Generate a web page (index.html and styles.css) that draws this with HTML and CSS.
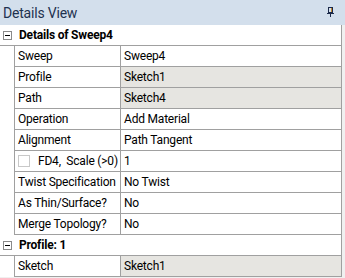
FILE: index.html
```html
<!DOCTYPE html>
<html lang="en">
<head>
  <meta charset="UTF-8" />
  <title>Details View</title>
  <link rel="stylesheet" href="styles.css">
</head>
<body>
  <div class="panel">
    <div class="title-bar">
      <span class="title">Details View</span>
      <svg class="pin" width="8" height="10" viewBox="0 0 8 10">
        <rect x="1.5" y="0.5" width="4" height="5" fill="none" stroke="#1c2a4a" stroke-width="1"/>
        <line x1="4.5" y1="1" x2="4.5" y2="5" stroke="#c98a2a" stroke-width="1"/>
        <line x1="0" y1="6.5" x2="7" y2="6.5" stroke="#1c2a4a" stroke-width="1"/>
        <line x1="3.5" y1="7" x2="3.5" y2="10" stroke="#1c2a4a" stroke-width="1"/>
      </svg>
    </div>

    <div class="grid">
      <div class="group">
        <span class="toggle"></span>
        <span class="group-name">Details of Sweep4</span>
      </div>
      <div class="row">
        <div class="name">Sweep</div>
        <div class="value">Sweep4</div>
      </div>
      <div class="row">
        <div class="name">Profile</div>
        <div class="value locked">Sketch1</div>
      </div>
      <div class="row">
        <div class="name">Path</div>
        <div class="value locked">Sketch4</div>
      </div>
      <div class="row">
        <div class="name">Operation</div>
        <div class="value">Add Material</div>
      </div>
      <div class="row">
        <div class="name">Alignment</div>
        <div class="value">Path Tangent</div>
      </div>
      <div class="row">
        <div class="name"><span class="check"></span>FD4,&nbsp; Scale (&gt;0)</div>
        <div class="value">1</div>
      </div>
      <div class="row">
        <div class="name">Twist Specification</div>
        <div class="value">No Twist</div>
      </div>
      <div class="row">
        <div class="name">As Thin/Surface?</div>
        <div class="value">No</div>
      </div>
      <div class="row">
        <div class="name">Merge Topology?</div>
        <div class="value">No</div>
      </div>
      <div class="group">
        <span class="toggle"></span>
        <span class="group-name">Profile: 1</span>
      </div>
      <div class="row">
        <div class="name">Sketch</div>
        <div class="value locked">Sketch1</div>
      </div>
    </div>
  </div>
</body>
</html>
```

FILE: styles.css
```css
body {
  margin: 0;
  font-family: Roboto, "Liberation Sans", sans-serif;
  font-size: 12px;
  color: #000;
  background: #f0f0f0;
}
.panel {
  width: 345px;
  height: 278px;
  overflow: hidden;
  background: #f0f0f0;
}
.title-bar {
  height: 25px;
  background: #d3dfec;
  display: flex;
  align-items: center;
  justify-content: space-between;
  padding: 0 10px 0 3px;
  box-sizing: border-box;
}
.title {
  font-size: 14px;
  color: #1e3250;
  letter-spacing: -0.2px;
}
.pin {
  display: block;
  margin-top: -2px;
}
.grid {
  width: 342px;
  background: #fff;
  letter-spacing: -0.2px;
}
.group {
  display: flex;
  align-items: center;
  height: 20px;
  border-bottom: 1px solid #a0a0a0;
  border-right: 1px solid #a0a0a0;
}
.toggle {
  position: relative;
  width: 7px;
  height: 7px;
  border: 1px solid #8a8a8a;
  margin-left: 3px;
  margin-right: 7px;
}
.toggle::after {
  content: "";
  position: absolute;
  left: 1px;
  right: 1px;
  top: 3px;
  height: 1px;
  background: #000;
}
.group-name {
  font-weight: bold;
}
.row {
  display: flex;
  height: 20px;
  margin-left: 14px;
  border-bottom: 1px solid #a0a0a0;
  border-left: 1px solid #a0a0a0;
  border-right: 1px solid #a0a0a0;
}
.name,
.value {
  display: flex;
  align-items: center;
  padding-left: 3px;
  white-space: nowrap;
  overflow: hidden;
}
.name {
  width: 102px;
  border-right: 1px solid #a0a0a0;
}
.value {
  flex: 1;
}
.locked {
  background: #e6e5e1;
}
.check {
  width: 10px;
  height: 10px;
  border: 1px solid #c8c8c8;
  margin-right: 8px;
  flex: none;
}
```
